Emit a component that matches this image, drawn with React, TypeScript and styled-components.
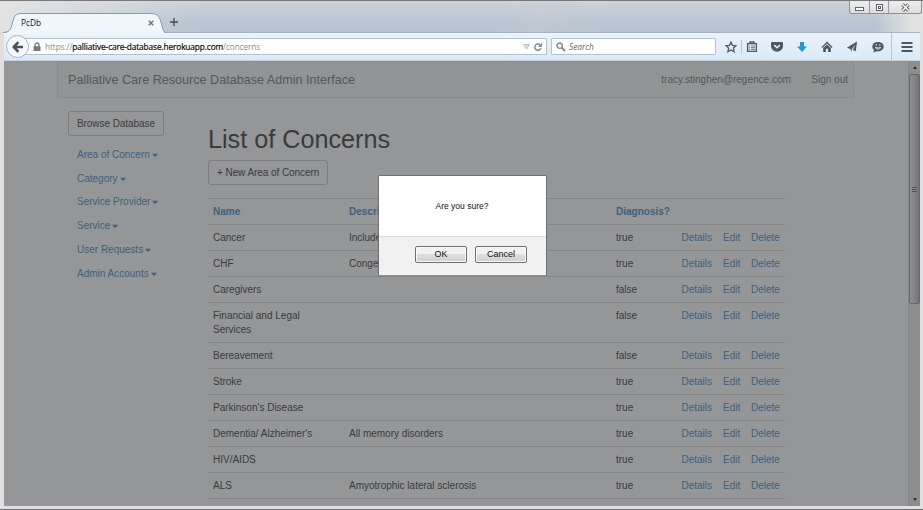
import React from 'react';
import styled, { createGlobalStyle } from 'styled-components';

const Global = createGlobalStyle`
  * { box-sizing: border-box; }
  html, body { margin: 0; padding: 0; overflow: hidden; }
  body { font-family: "Liberation Sans", Arial, sans-serif; font-size: 10px; line-height: 14px; }
  svg { display: block; }
`;

const LINK = '#41607f';
const LINE = '#838586';

const Window = styled.div`
  position: relative;
  width: 923px;
  height: 510px;
  display: flex;
  flex-direction: column;
  overflow: hidden;
  background: #dfe0df;
  border-top: 1px solid #77787c;
  border-bottom: 1px solid #6d7075;
`;

const TitleBar = styled.div`
  height: 31px;
  flex: none;
  display: flex;
  align-items: flex-start;
  padding-left: 3px;
  background:
    linear-gradient(90deg, #e3e3e1 0, rgba(226,228,230,.75) 45px, rgba(215,221,228,0) 200px, rgba(215,221,228,0) 875px, #e0e1e0 910px),
    linear-gradient(105deg, transparent 54%, rgba(205,208,216,.3) 58%, transparent 66%),
    linear-gradient(180deg, #d0d3d9 0, #c2cad5 12px, #b8c5d2 22px, #b7c3d0 100%);
`;

const Tab = styled.div`
  position: relative;
  width: 163px;
  height: 20px;
  margin-top: 12px;
  padding: 0 12px 0 18px;
  display: flex;
  align-items: center;
  justify-content: space-between;
  font: 8.3px/18px "Open Sans", "Noto Sans", sans-serif;
  color: #111;
`;

const TabShape = styled.svg`
  position: absolute;
  left: 0;
  top: 0;
`;

const TabText = styled.span`
  position: relative;
  margin-top: -1px;
`;

const TabIcon = styled.svg`
  position: relative;
`;

const NewTab = styled.svg`
  margin: 17px 0 0 4px;
`;

const WindowControls = styled.div`
  display: flex;
  width: 73px;
  height: 13px;
  margin-left: auto;
  margin-right: 1px;
  background: linear-gradient(#eeeeed, #dededf);
  border: 1px solid #8e9094;
  border-top: 0;
  border-radius: 0 0 3px 3px;
`;

const ControlButton = styled.div<{ $w: number }>`
  width: ${p => p.$w}px;
  display: flex;
  align-items: center;
  justify-content: center;
  & + & { border-left: 1px solid #97999c; }
`;

const Toolbar = styled.div`
  height: 29px;
  flex: none;
  display: flex;
  align-items: center;
  margin: 0 3px 0 4px;
  background: linear-gradient(#ebf3fb, #dbe9f8);
  border-top: 1px solid #a5b3c2;
  border-bottom: 1px solid #c3d2e1;
`;

const BackButton = styled.div`
  position: relative;
  z-index: 1;
  width: 23px;
  height: 23px;
  flex: none;
  margin-left: 2px;
  margin-right: -5px;
  border: 1px solid #a3b4c5;
  border-radius: 50%;
  background: #f5f9fd;
  display: flex;
  align-items: center;
  justify-content: center;
`;

const Field = styled.div<{ $w: number }>`
  width: ${p => p.$w}px;
  height: 17px;
  flex: none;
  display: flex;
  align-items: center;
  background: #fff;
  border: 1px solid #b3c2d0;
  border-radius: 1px;
  font: 8.5px/14px "Open Sans", "Noto Sans", sans-serif;
  color: #8b8b8b;
  white-space: nowrap;
`;

const UrlField = styled(Field)`
  padding: 0 3px 0 8px;
  margin-right: 4px;
  b { font-weight: 400; color: #080808; -webkit-text-stroke: 0.2px #080808; }
`;

const Url = styled.span`
  margin-left: 4px;
  flex: 1;
  font-size: 8.3px;
  letter-spacing: -0.12px;
`;

const SearchField = styled(Field)`
  padding-left: 4px;
  font-style: italic;
  font-size: 8.3px;
  color: #666;
  gap: 3px;
  margin-right: 9px;
`;

const Tools = styled.div`
  flex: 1;
  display: flex;
  align-items: center;
`;

const Tool = styled.div<{ $ml: number }>`
  width: 12px;
  margin-left: ${p => p.$ml}px;
  flex: none;
`;

const Divider = styled.div<{ $h: number; $ml: number }>`
  width: 1px;
  height: ${p => p.$h}px;
  margin-left: ${p => p.$ml}px;
  background: #b5c5d5;
`;

const Viewport = styled.div`
  height: 445px;
  flex: none;
  margin: 0 3px 0 4px;
  display: flex;
  overflow: hidden;
  background: #949697;
`;

const Page = styled.div`
  flex: 1;
  color: #3a3b3c;
  padding: 0 54px 0 53px;
  background-image: repeating-conic-gradient(rgba(255,255,255,.016) 0 25%, rgba(0,0,0,.012) 0 50%);
  background-size: 2px 2px;
`;

const Navbar = styled.div`
  height: 37px;
  display: flex;
  align-items: center;
  padding: 0 5px 0 10px;
  border: 1px solid #898b8c;
  border-top-color: #8c8e8f;
  border-radius: 3px;
  background: rgba(140,142,143,.3);
  color: #555758;
`;

const Brand = styled.div`
  flex: 1;
  font-size: 12.6px;
`;

const NavItem = styled.div`
  margin-left: 20.5px;
`;

const Columns = styled.div`
  display: flex;
`;

const Sidebar = styled.div`
  width: 140px;
  flex: none;
  margin: 13px 0 0 11px;
`;

const Button = styled.div`
  display: inline-block;
  height: 25px;
  padding: 5px 8px 0;
  border: 1px solid #7c7e80;
  border-radius: 3px;
  white-space: nowrap;
  letter-spacing: -0.07px;
`;

const Menu = styled.div`
  margin: 7px 0 0 9px;
`;

const MenuItem = styled.div`
  height: 23.8px;
  display: flex;
  align-items: center;
  gap: 2px;
  color: ${LINK};
`;

const Main = styled.div`
  width: 577px;
`;

const Heading = styled.h1`
  margin: 27px 0 7px;
  font-size: 25.2px;
  line-height: 28px;
  font-weight: 400;
`;

const Table = styled.table`
  width: 577px;
  margin-top: 13px;
  table-layout: fixed;
  border-collapse: separate;
  border-spacing: 0;
  border-bottom: 1px solid ${LINE};
`;

const Cell = styled.td<{ $link?: boolean; $wrap?: boolean }>`
  padding: 6px ${p => (p.$wrap ? 30 : 0)}px 5px 5px;
  border-top: 1px solid ${LINE};
  color: ${p => (p.$link ? LINK : 'inherit')};
  vertical-align: top;
  white-space: ${p => (p.$wrap ? 'normal' : 'nowrap')};
`;

const HeadCell = styled(Cell).attrs({ as: 'th' })`
  text-align: left;
  font-weight: 700;
  color: ${LINK};
`;

const Scrollbar = styled.div`
  width: 12px;
  display: flex;
  flex-direction: column;
  align-items: center;
  background: #8b8d8e;
  border-left: 1px solid #848687;
`;

const ScrollArrow = styled.div<{ $down?: boolean }>`
  border: 2.5px solid transparent;
  border-${p => (p.$down ? 'top' : 'bottom')}: 3px solid #303234;
  border-${p => (p.$down ? 'bottom' : 'top')}: 0;
  margin: ${p => (p.$down ? 'auto 0 5px' : '5px 0 5px')};
`;

const Thumb = styled.div`
  width: 11px;
  height: 230px;
  display: flex;
  flex-direction: column;
  align-items: center;
  justify-content: center;
  border: 1px solid #65676a;
  border-radius: 2px;
  background: linear-gradient(90deg, #8e8f91, #828386 50%, #727377);
`;

const Grip = styled.div`
  width: 5px;
  height: 5px;
  background: repeating-linear-gradient(#4a4c4e 0 1px, #8d8f91 1px 2px);
`;

const Dialog = styled.div`
  position: absolute;
  left: 378px;
  top: 174px;
  width: 169px;
  height: 101px;
  display: flex;
  flex-direction: column;
  background: #fff;
  border: 1px solid #6e7072;
  border-bottom-color: #8b8d8e;
  border-radius: 2px 2px 0 0;
  color: #111;
  font-size: 8.5px;
`;

const Message = styled.div`
  height: 61px;
  display: flex;
  align-items: center;
  justify-content: center;
  padding-right: 1px;
  border-bottom: 1px solid #dedede;
`;

const Actions = styled.div`
  flex: 1;
  display: flex;
  justify-content: flex-end;
  gap: 8px;
  padding: 9px 19px 0 0;
  background: #f1f1f1;
`;

const DialogButton = styled.div`
  width: 52px;
  height: 17px;
  text-align: center;
  line-height: 15px;
  font-size: 9px;
  border: 1px solid #707070;
  border-radius: 2px;
  box-shadow: inset 0 0 0 1px #fafafa;
  background: linear-gradient(#f2f2f2 0 45%, #dedede 50%, #d0d0d0);
`;

const INK = '#4c5863';

const menu = ['Area of Concern', 'Category', 'Service Provider', 'Service', 'User Requests', 'Admin Accounts'];

const rows: [string, string, string][] = [
  ['Cancer', 'Includes', 'true'],
  ['CHF', 'Congestive', 'true'],
  ['Caregivers', '', 'false'],
  ['Financial and Legal Services', '', 'false'],
  ['Bereavement', '', 'false'],
  ['Stroke', '', 'true'],
  ["Parkinson's Disease", '', 'true'],
  ["Dementia/ Alzheimer's", 'All memory disorders', 'true'],
  ['HIV/AIDS', '', 'true'],
  ['ALS', 'Amyotrophic lateral sclerosis', 'true'],
];

const Glyph = ({ children }: { children: React.ReactNode }) => (
  <svg width="12" height="12" viewBox="0 0 12 12" fill={INK}>{children}</svg>
);

const Caret = () => (
  <svg width="6" height="4" viewBox="0 0 6 4"><path d="M0 .7H6L3 4Z" fill={LINK} /></svg>
);

export default function App() {
  return (
    <>
      <Global />
      <Window>
        <TitleBar>
          <Tab>
            <TabShape width="163" height="21" viewBox="0 0 163 21">
              <path d="M0 20.500C8 20 8 15 10 8C11.500 2 13 .5 19 .5H148C154 .5 156 3 158 9C160 16 160 19.500 163 20.500V21H0Z" fill="#f0f6fc" />
              <path d="M0 19.500C8 19 8 15 10 8C11.500 2 13 .5 19 .5H148C154 .5 156 3 158 9C160 16 160 19 163 19.500" fill="none" stroke="#8b99a8" />
            </TabShape>
            <TabText>PcDb</TabText>
            <TabIcon width="6" height="6" viewBox="0 0 6 6"><path d="M.7.7 5.300 5.300M5.300.7.7 5.300" stroke="#75797e" strokeWidth="1.500" /></TabIcon>
          </Tab>
          <NewTab width="8" height="8" viewBox="0 0 8 8"><path d="M4 0V8M0 4H8" stroke="#404a55" strokeWidth="1.300" /></NewTab>
          <WindowControls>
            <ControlButton $w={19}>
              <svg width="9" height="9"><rect x=".5" y="4.500" width="8" height="3" fill="#fff" stroke="#62646c" /></svg>
            </ControlButton>
            <ControlButton $w={19}>
              <svg width="9" height="9"><rect x="1.500" y="1.500" width="6" height="6" fill="#fff" stroke="#62646c" /><rect x="3.500" y="3.500" width="2" height="2" fill="#fff" stroke="#62646c" /></svg>
            </ControlButton>
            <ControlButton $w={33}>
              <svg width="9" height="9"><path d="M1.500 1.500 7.500 7.500M7.500 1.500 1.500 7.500" stroke="#62646c" strokeWidth="3.400" /><path d="M1.500 1.500 7.500 7.500M7.500 1.500 1.500 7.500" stroke="#fff" strokeWidth="1.500" /></svg>
            </ControlButton>
          </WindowControls>
        </TitleBar>

        <Toolbar>
          <BackButton>
            <svg width="12" height="12" viewBox="0 0 12 12"><path d="M6.300 1.200 1.800 6l4.500 4.800M2.200 6H11" fill="none" stroke="#46525e" strokeWidth="2.600" /></svg>
          </BackButton>
          <UrlField $w={523}>
            <svg width="8" height="10" viewBox="0 0 8 10"><path d="M2 5V3a2 2 0 0 1 4 0v2" fill="none" stroke="#777" strokeWidth="1.300" /><rect x=".5" y="4.300" width="7" height="4.700" rx=".6" fill="#777" /></svg>
            <Url>https://<b>palliative-care-database.herokuapp.com</b>/concerns</Url>
            <svg width="20" height="10" viewBox="0 0 20 10">
              <path d="M.5 2.500H6.500L3.500 7Z" fill="#dfe5ea" stroke="#b3bdc6" />
              <path d="M18 6.300A3.200 3.200 0 1 1 17 2.600" fill="none" stroke="#7c8e9f" strokeWidth="1.500" />
              <path d="M19 .8V5H14.800Z" fill="#7c8e9f" />
            </svg>
          </UrlField>
          <SearchField $w={165}>
            <svg width="10" height="10" viewBox="0 0 10 10"><circle cx="3.700" cy="3.700" r="2.700" fill="none" stroke="#858585" strokeWidth="1.400" /><path d="M5.800 5.800 9 9" stroke="#858585" strokeWidth="1.900" /></svg>
            <span>Search</span>
          </SearchField>
          <Tools>
            <Tool $ml={0}><Glyph><path d="M6 1 7.500 4.300 11 4.700 8.400 7.100 9.100 10.700 6 8.900 2.900 10.700 3.600 7.100 1 4.700 4.500 4.300Z" fill="none" stroke={INK} strokeWidth="1.300" /></Glyph></Tool>
            <Divider $h={13} $ml={4} />
            <Tool $ml={4}><Glyph><path d="M1.600 2.600H10.400V10.400H1.600Z" fill="none" stroke={INK} strokeWidth="1.300" /><path d="M4 2.500V1H8V2.500" fill="none" stroke={INK} strokeWidth="1.300" /><path d="M3 5H4M5 5H9M3 6.700H4M5 6.700H9M3 8.400H4M5 8.400H9" stroke={INK} strokeWidth=".8" /></Glyph></Tool>
            <Tool $ml={13}><Glyph><path d="M1 1H11Q12 1 12 2V5A6 5.800 0 0 1 0 5V2Q0 1 1 1Z" /><path d="M3.200 4.100 6 6.700 8.800 4.100" fill="none" stroke="#e8f1fa" strokeWidth="1.500" /></Glyph></Tool>
            <Tool $ml={13}><Glyph><path d="M4 1H8V5.500H11L6 11 1 5.500H4Z" fill="#1f98d6" /></Glyph></Tool>
            <Tool $ml={13}><Glyph><path d="M6 .6 11.500 6 10.700 6.900 6 2.400 1.300 6.900.5 6Z" /><path d="M2.200 7 6 3.400 9.800 7V11H7.100V7.800H4.900V11H2.200Z" /></Glyph></Tool>
            <Tool $ml={13}><Glyph><path d="M11 .6 9.800 10.300 6.800 9 9.600 3.200 5.600 8.400V11.300L4.300 8 .8 6.800Z" /></Glyph></Tool>
            <Tool $ml={14}><Glyph><ellipse cx="6" cy="5.700" rx="5.700" ry="4.800" /><path d="M2 8.500 1.500 11.500 6 9.800Z" /><path d="M2.800 6H9.200Q8.600 8.600 6 8.600T2.800 6Z" fill="#dfe9f2" /><path d="M3.800 7H8.200" stroke={INK} strokeWidth=".7" /><circle cx="4.200" cy="4" r=".8" fill="#dfe9f2" /><circle cx="7.800" cy="4" r=".8" fill="#dfe9f2" /></Glyph></Tool>
            <Divider $h={27} $ml={7} />
            <Tool $ml={9}><Glyph><path d="M.5 1H11.500V3H.5ZM.5 5H11.500V7H.5ZM.5 9H11.500V11H.5Z" /></Glyph></Tool>
          </Tools>
        </Toolbar>

        <Viewport>
          <Page>
            <Navbar>
              <Brand>Palliative Care Resource Database Admin Interface</Brand>
              <NavItem>tracy.stinghen@regence.com</NavItem>
              <NavItem>Sign out</NavItem>
            </Navbar>
            <Columns>
              <Sidebar>
                <Button>Browse Database</Button>
                <Menu>{menu.map(m => <MenuItem key={m}>{m}<Caret /></MenuItem>)}</Menu>
              </Sidebar>
              <Main>
                <Heading>List of Concerns</Heading>
                <Button>+ New Area of Concern</Button>
                <Table>
                  <colgroup>
                    <col width="136" /><col width="267" /><col width="65.5" /><col width="41.500" /><col width="28" /><col width="39" />
                  </colgroup>
                  <thead>
                    <tr><HeadCell>Name</HeadCell><HeadCell>Description</HeadCell><HeadCell>Diagnosis?</HeadCell><HeadCell /><HeadCell /><HeadCell /></tr>
                  </thead>
                  <tbody>
                    {rows.map(([name, desc, diagnosis]) => (
                      <tr key={name}>
                        <Cell $wrap={name.length > 24}>{name}</Cell>
                        <Cell>{desc}</Cell>
                        <Cell>{diagnosis}</Cell>
                        <Cell $link>Details</Cell>
                        <Cell $link>Edit</Cell>
                        <Cell $link>Delete</Cell>
                      </tr>
                    ))}
                  </tbody>
                </Table>
              </Main>
            </Columns>
          </Page>
          <Scrollbar>
            <ScrollArrow />
            <Thumb><Grip /></Thumb>
            <ScrollArrow $down />
          </Scrollbar>
        </Viewport>

        <Dialog>
          <Message>Are you sure?</Message>
          <Actions>
            <DialogButton>OK</DialogButton>
            <DialogButton>Cancel</DialogButton>
          </Actions>
        </Dialog>
      </Window>
    </>
  );
}
